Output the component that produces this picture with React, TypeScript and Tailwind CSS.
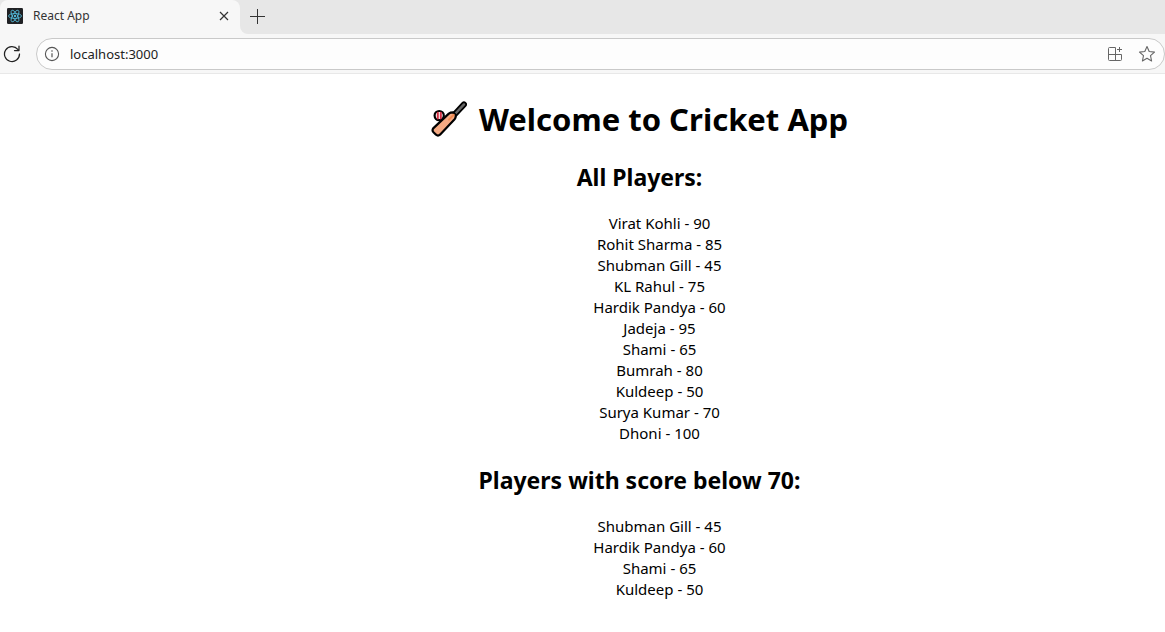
type Player = { name: string; score: number };

const players: Player[] = [
  { name: "Virat Kohli", score: 90 },
  { name: "Rohit Sharma", score: 85 },
  { name: "Shubman Gill", score: 45 },
  { name: "KL Rahul", score: 75 },
  { name: "Hardik Pandya", score: 60 },
  { name: "Jadeja", score: 95 },
  { name: "Shami", score: 65 },
  { name: "Bumrah", score: 80 },
  { name: "Kuldeep", score: 50 },
  { name: "Surya Kumar", score: 70 },
  { name: "Dhoni", score: 100 },
];

function ReactLogo() {
  return (
    <svg className="size-4 shrink-0" viewBox="0 0 32 32" fill="none" stroke="#53b9d8" strokeWidth="1.7" aria-hidden="true">
      <rect width="32" height="32" rx="2.5" fill="#202124" stroke="none" />
      <ellipse cx="16" cy="16" rx="13" ry="5" />
      <ellipse cx="16" cy="16" rx="13" ry="5" transform="rotate(60 16 16)" />
      <ellipse cx="16" cy="16" rx="13" ry="5" transform="rotate(120 16 16)" />
      <circle cx="16" cy="16" r="2.4" fill="#53b9d8" stroke="none" />
    </svg>
  );
}

function CricketBat() {
  return (
    <svg className="size-9 shrink-0" viewBox="0 0 36 36" strokeLinecap="round" strokeLinejoin="round" aria-hidden="true">
      <circle cx="8.2" cy="14.6" r="4.6" fill="#fff" stroke="#000" strokeWidth="2.2" />
      <path d="M6.8 11.8v5.6M9.8 11.8v5.6" stroke="#d22f43" strokeWidth="2" />
      <path d="M24 13 33 3.4" stroke="#000" strokeWidth="6" />
      <path d="M24 13 33 3.4" stroke="#686868" strokeWidth="2.4" />
      <path d="M2.2 27.4 17.8 12.6q1.8-1.3 4.4-1.2l2.6 2.7q.2 2.6-1.2 4.2L9 33.7q-2 1.7-4 0l-2.5-2.4q-1.7-1.8-.3-3.9Z" fill="#f4aa83" stroke="#000" strokeWidth="2.2" />
      <path d="m18 18.6 4.7-4.8" stroke="#f28a50" strokeWidth="2" />
    </svg>
  );
}

function TabStrip() {
  return (
    <header className="flex h-[34px] bg-[#e7e7e7]">
      <div className="flex w-60 items-center gap-2.5 rounded-tl-lg rounded-tr-lg bg-[#f7f7f7] pr-1.5 pb-0.5 pl-[7px]">
        <ReactLogo />
        <span className="flex-1 text-[12px] leading-4 text-[#333]">React App</span>
        <button type="button" aria-label="Close tab" className="flex size-5 items-center justify-center">
          <svg className="size-2.5" viewBox="0 0 10 10" stroke="#333" strokeWidth="1.2" aria-hidden="true">
            <path d="m1 1 8 8M9 1 1 9" />
          </svg>
        </button>
      </div>
      <div className="flex-1 bg-[#f7f7f7]">
        <div className="flex h-full items-center rounded-bl-lg bg-[#e7e7e7] pb-0.5 pl-[7px]">
          <button type="button" aria-label="New tab" className="flex size-5 items-center justify-center">
            <svg className="size-[15px]" viewBox="0 0 15 15" stroke="#333" aria-hidden="true">
              <path d="M7.5 0v15M0 7.5h15" />
            </svg>
          </button>
        </div>
      </div>
    </header>
  );
}

function AddressBar() {
  return (
    <div className="flex h-10 items-center border-b border-[#e8e8e8] bg-[#f7f7f7] pl-0.5">
      <button type="button" aria-label="Refresh" className="flex size-5 shrink-0 items-center justify-center">
        <svg className="size-[18px]" viewBox="0 0 18 18" fill="none" stroke="#222" strokeWidth="1.25" strokeLinecap="round" strokeLinejoin="round" aria-hidden="true">
          <path d="M16.5 9A7.5 7.5 0 1 1 14.8 4.3M16 1v4.5h-4.5" />
        </svg>
      </button>
      <div className="ml-3.5 flex h-8 flex-1 items-center rounded-full border border-[#c9c9c9] bg-[#fdfdfd] px-[7px]">
        <svg className="size-4 shrink-0" viewBox="0 0 16 16" fill="none" stroke="#555" aria-hidden="true">
          <circle cx="8" cy="8" r="6.6" strokeWidth="1.1" />
          <path d="M8 7.2v4" strokeWidth="1.2" />
          <circle cx="8" cy="5" r=".8" fill="#555" stroke="none" />
        </svg>
        <input
          aria-label="Address"
          defaultValue="localhost:3000"
          className="ml-2 h-6 min-w-0 flex-1 bg-transparent px-0.5 text-[13px] text-[#222] outline-none"
        />
        <button type="button" aria-label="Apps" className="flex size-5 items-center justify-center">
          <svg className="size-4" viewBox="0 0 16 16" fill="none" stroke="#666" strokeLinejoin="round" aria-hidden="true">
            <path d="M8.5 1.5h-6a1 1 0 0 0-1 1v11a1 1 0 0 0 1 1h11a1 1 0 0 0 1-1v-5h-13M8.5 1.5v13M12.5 1v5M10 3.5h5" />
          </svg>
        </button>
        <button type="button" aria-label="Add to favorites" className="ml-3 flex size-5 items-center justify-center">
          <svg className="size-[18px]" viewBox="0 0 18 18" fill="none" stroke="#666" strokeWidth="1.1" strokeLinejoin="round" aria-hidden="true">
            <path d="m9 1.6 2.2 4.9 5.3.6-4 3.6 1.1 5.3L9 13.3 4.4 16l1.1-5.3-4-3.6 5.3-.6Z" />
          </svg>
        </button>
      </div>
    </div>
  );
}

function PlayerList({ items }: { items: Player[] }) {
  return (
    <ul className="pl-10 text-[15px] leading-[21px]">
      {items.map((player) => (
        <li key={player.name}>
          {player.name} - {player.score}
        </li>
      ))}
    </ul>
  );
}

export default function App() {
  return (
    <div className="min-h-screen bg-white font-['Noto_Sans',sans-serif]">
      <TabStrip />
      <AddressBar />
      <main className="pt-[23px] pb-8 pl-[114px] text-center text-black">
        <h1 className="flex items-center justify-center gap-3 text-[31px] leading-[44px] font-bold">
          <CricketBat />
          <span>Welcome to Cricket App</span>
        </h1>
        <h2 className="mt-5 mb-5 text-[23px] leading-8 font-bold">All Players:</h2>
        <PlayerList items={players} />
        <h2 className="mt-5 mb-5 text-[23px] leading-8 font-bold">Players with score below 70:</h2>
        <PlayerList items={players.filter((player) => player.score < 70)} />
      </main>
    </div>
  );
}
